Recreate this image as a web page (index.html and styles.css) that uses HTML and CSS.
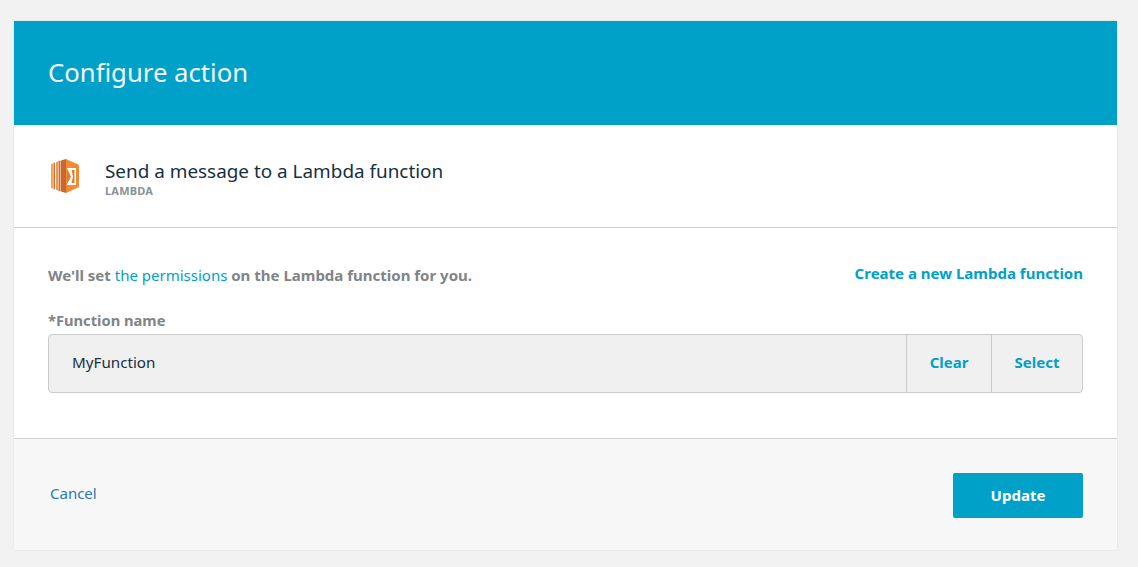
FILE: index.html
```html
<!DOCTYPE html>
<html lang="en">
<head>
<meta charset="utf-8">
<title>Configure action</title>
<link rel="stylesheet" href="styles.css">
</head>
<body>
<main class="card">
  <header class="head"><h1 class="head-title">Configure action</h1></header>
  <section class="action">
    <svg class="action-icon" width="30" height="36" viewBox="0 0 30 36" aria-hidden="true">
      <polygon points="1,6 3,5.500 3,30.500 1,30" fill="#f0a368"/>
      <polygon points="3.500,5 5,4.500 5,31.500 3.500,31" fill="#cf6f2c"/>
      <polygon points="6,4 8,3.500 8,32.500 6,32" fill="#ee9a55"/>
      <polygon points="8.500,3 10.500,2.500 10.500,33.500 8.500,33" fill="#cf6f2c"/>
      <polygon points="11,2.500 16,1 16,35 11,33.500" fill="#c9682a"/>
      <polygon points="16,1 29,7 29,29 16,35" fill="#f08a35"/>
      <polygon points="17,10 26,10 26,27 17,27 17,26 20.500,18.500 17,11" fill="#fff"/>
      <polygon points="17,11 21,18.500 17,26" fill="#e07c2e"/>
      <polygon points="21.500,12 24.500,12 24.500,25 21.500,25 23,18.500" fill="#e07c2e"/>
    </svg>
    <div class="action-text">
      <div class="action-title">Send a message to a Lambda function</div>
      <div class="action-sub">LAMBDA</div>
    </div>
  </section>
  <section class="form">
    <div class="form-top">
      <p class="note">We'll set <a class="note-link" href="#">the permissions</a> on the Lambda function for you.</p>
      <a class="create" href="#">Create a new Lambda function</a>
    </div>
    <label class="field-label">*Function name</label>
    <div class="field">
      <span class="field-value">MyFunction</span>
      <button class="field-btn field-clear" type="button">Clear</button>
      <button class="field-btn field-select" type="button">Select</button>
    </div>
  </section>
  <footer class="foot">
    <a class="cancel" href="#">Cancel</a>
    <button class="update" type="button">Update</button>
  </footer>
</main>
</body>
</html>
```
FILE: styles.css
```css
* { box-sizing: border-box; }
html, body { height: 100%; }
body {
  margin: 0;
  padding: 21px 21px 17px 14px;
  background: #f2f2f2;
  font-family: "Noto Sans", "Open Sans", sans-serif;
  color: #16303f;
  overflow: hidden;
}
.card {
  width: 1103px;
  height: 529px;
  display: flex;
  flex-direction: column;
  background: #fff;
  box-shadow: 0 0 2px rgba(0, 0, 0, .1);
}
.head {
  height: 104px;
  flex: none;
  display: flex;
  align-items: center;
  padding: 0 34px 1px;
  background: #00a1c9;
}
.head-title {
  margin: 0;
  font-size: 25.7px;
  font-weight: 400;
  color: #f2f6f8;
}
.action {
  height: 103px;
  flex: none;
  display: flex;
  align-items: center;
  gap: 25px;
  padding: 3px 36px 0;
  border-bottom: 1px solid #cfcfcf;
}
.action-icon { flex: none; margin-top: -4px; }
.action-title { font-size: 18.900px; line-height: 24px; margin-bottom: 1px; }
.action-sub { font-size: 11px; line-height: 13px; font-weight: 700; color: #879196; letter-spacing: .2px; }
.form {
  height: 211px;
  flex: none;
  padding: 35px 34px 0;
  border-bottom: 1px solid #cfcfcf;
}
.form-top {
  display: flex;
  justify-content: space-between;
  align-items: flex-start;
}
.note {
  margin: 2px 0 0;
  font-size: 15px;
  line-height: 20px;
  font-weight: 700;
  color: #808487;
}
.note-link { font-weight: 400; color: #00a1c9; text-decoration: none; }
.create {
  font-size: 15px;
  line-height: 20px;
  font-weight: 700;
  color: #00a1c9;
  text-decoration: none;
}
.field-label {
  display: block;
  margin-top: 25px;
  font-size: 14.700px;
  line-height: 20px;
  font-weight: 700;
  color: #808487;
}
.field {
  display: flex;
  align-items: stretch;
  height: 59px;
  margin-top: 4px;
  background: #f0f0f0;
  border: 1px solid #c9cbcd;
  border-radius: 4px;
}
.field-value {
  flex: 1;
  align-self: center;
  padding-left: 23px;
  padding-bottom: 3px;
  font-size: 15.200px;
}
.field-btn {
  border: 0;
  border-left: 1px solid #c9cbcd;
  background: none;
  padding: 0 0 3px;
  font: 700 15px "Noto Sans", "Open Sans", sans-serif;
  color: #00a1c9;
}
.field-clear { width: 85px; }
.field-select { width: 91px; }
.foot {
  flex: 1;
  display: flex;
  justify-content: space-between;
  align-items: center;
  padding: 0 34px 0 36px;
  background: #f7f7f7;
}
.cancel {
  font-size: 15px;
  line-height: 20px;
  color: #2d77b8;
  text-decoration: none;
  margin-bottom: 4px;
}
.update {
  width: 130px;
  height: 45px;
  border: 0;
  border-radius: 2px;
  background: #00a1c9;
  color: #fff;
  font: 700 15px "Noto Sans", "Open Sans", sans-serif;
  padding: 0;
  margin-top: 1px;
}
```
